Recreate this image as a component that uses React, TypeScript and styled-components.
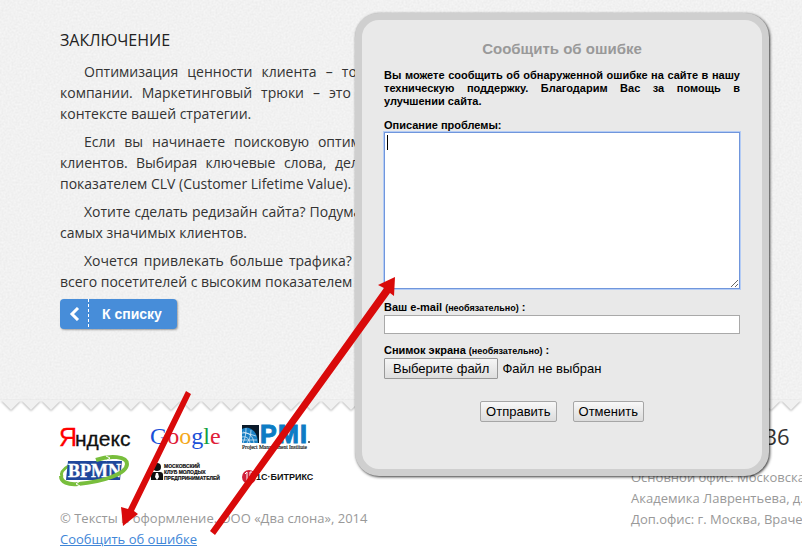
import React from 'react';
import styled, { createGlobalStyle } from 'styled-components';

const GlobalStyle = createGlobalStyle`
  *, *::before, *::after { box-sizing: border-box; }
  body { margin: 0; background: #fff; overflow-x: hidden; }
`;

const sans = '"Open Sans", "Noto Sans", sans-serif';
const arial = '"Liberation Sans", Arial, sans-serif';

const Page = styled.div`
  position: relative;
  overflow: hidden;
  font-family: ${sans};
  font-size: 14px;
  line-height: 21px;
  color: #333;
`;

const Paper = styled.main`
  position: relative;
  padding: 30px 52px 71px 60px;
  background: #f0f0f0;
`;

const Grain = styled.svg`
  position: absolute;
  inset: 0;
  width: 100%;
  height: 100%;
  pointer-events: none;
`;

const Article = styled.article`
  position: relative;
  margin-bottom: 7px;
`;

const Heading = styled.h2`
  margin: 0 0 10px;
  font-size: 16px;
  line-height: 21px;
  font-weight: 400;
  text-transform: uppercase;
  color: #222;
`;

const Paragraph = styled.p`
  margin: 0 0 7px;
  text-align: justify;
  text-indent: 24px;
`;

const BackButton = styled.button`
  position: relative;
  display: flex;
  align-items: center;
  height: 30px;
  padding: 0;
  border: 0;
  border-radius: 4px;
  background: #478dd9;
  color: #fff;
  font: bold 14px/20px ${arial};
  box-shadow: 1px 1px 2px rgba(0, 0, 0, 0.35);
`;

const BackIcon = styled.span`
  display: flex;
  align-items: center;
  justify-content: center;
  width: 29px;
  height: 30px;
  background: repeating-linear-gradient(#fff 0 3px, transparent 3px 5px) right / 1px 100% no-repeat;
`;

const BackText = styled.span`
  padding: 0 15px 0 13px;
`;

const TornEdge = styled.svg`
  display: block;
  width: 100%;
  height: 16px;
  filter: drop-shadow(0 1px 1px rgba(0, 0, 0, 0.3));
`;

const Footer = styled.footer`
  display: flex;
  justify-content: space-between;
  padding: 8px 0 4px 60px;
  font-size: 13px;
  color: #999;
`;

const Logos = styled.div`
  display: grid;
  grid-template-columns: repeat(3, 90px);
  grid-template-rows: 31px 34px;
  margin-bottom: 19px;
`;

const Logo = styled.svg`
  display: block;
  width: 80px;
  height: 34px;
  overflow: visible;
`;

const FooterLink = styled.a`
  color: #4086d8;
  text-decoration: underline;
`;

const Contacts = styled.address`
  width: 171px;
  font-style: normal;
  white-space: nowrap;
`;

const Phone = styled.div`
  margin-bottom: 18px;
  font-size: 22px;
  line-height: 25px;
  color: #333;
`;

const Dialog = styled.form`
  position: absolute;
  top: 13px;
  left: 355px;
  width: 414px;
  padding: 18px 22px 47px;
  border: 7px solid #cfcfcf;
  border-radius: 24px;
  background: #e9e9e9;
  box-shadow: 1px 1px 3px rgba(0, 0, 0, 0.8);
  font: bold 11px/13px ${arial};
  color: #000;
`;

const DialogTitle = styled.h3`
  margin: 0 0 10px;
  font-size: 15px;
  line-height: 21px;
  text-align: center;
  color: #999;
`;

const Intro = styled.p`
  margin: 0 0 11px;
  text-align: justify;
`;

const Field = styled.div<{ $gap: number }>`
  display: flex;
  flex-direction: column;
  margin-bottom: ${(p) => p.$gap}px;
`;

const Label = styled.label`
  display: block;
`;

const Optional = styled.span`
  font-size: 9px;
`;

const Message = styled.textarea`
  display: block;
  width: 100%;
  height: 157px;
  padding: 2px;
  border: 1px solid #7096dc;
  outline: 1px solid #b4ccf5;
  outline-offset: 0;
  background: #fff;
  font: 13px/16px ${arial};
  resize: vertical;
`;

const MessageBox = styled.div`
  position: relative;
`;

const Caret = styled.span`
  position: absolute;
  top: 3px;
  left: 3px;
  width: 1px;
  height: 15px;
  background: #000;
`;

const Email = styled.input`
  width: 100%;
  height: 19px;
  padding: 1px 2px;
  border: 1px solid #a9a9a9;
  background: #fff;
  font: 13px/15px ${arial};
`;

const FileRow = styled.div`
  display: flex;
  align-items: center;
  gap: 4px;
  font: 13px/19px ${arial};
`;

const FileInput = styled.input`
  position: absolute;
  width: 1px;
  height: 1px;
  opacity: 0;
`;

const FileButton = styled.label`
  padding: 0 8px;
  border: 1px solid #999;
  border-radius: 1px;
  background: linear-gradient(#f6f6f6, #dedede);
`;

const Actions = styled.div`
  display: flex;
  justify-content: center;
  gap: 16px;
`;

const ActionButton = styled.button`
  height: 21px;
  padding: 0 5px;
  border: 1px solid #a6a6a6;
  border-radius: 2px;
  background: linear-gradient(#f8f8f8, #dcdcdc);
  color: #000;
  font: 13px/19px ${arial};
`;

const Arrows = styled.svg`
  position: absolute;
  top: 0;
  left: 0;
  pointer-events: none;
`;

const paragraphs = [
  'Оптимизация ценности клиента – то, на чем именно должно строиться развитие любой компании. Маркетинговый трюки – это и лишь тот инструмент, который работает только в контексте вашей стратегии.',
  'Если вы начинаете поисковую оптимизацию, подумайте о привлечении и самых ценных клиентов. Выбирая ключевые слова, делайте акцент на тех запросах посетителей с высоким показателем CLV (Customer Lifetime Value).',
  'Хотите сделать редизайн сайта? Подумайте, как он поможет удержать и привлечь современной самых значимых клиентов.',
  'Хочется привлекать больше трафика? Определите, какие именно и каналы приводят больше всего посетителей с высоким показателем CLV.',
];

const YandexLogo = () => (
  <Logo viewBox="0 0 80 34" role="img" aria-label="Яндекс">
    <text y="22" fontFamily='"Liberation Sans", sans-serif' fontSize="21" fill="#111" stroke="#111" strokeWidth=".3">
      <tspan x="-1" fill="#f00" stroke="#f00" fontSize="25">Я</tspan>
      <tspan x="15">ндекс</tspan>
    </text>
  </Logo>
);

const GoogleLogo = () => (
  <Logo viewBox="0 0 80 34" role="img" aria-label="Google">
    <text y="20" fontFamily='"Liberation Serif", serif' fontSize="24">
      <tspan fill="#1a50d8">G</tspan>
      <tspan fill="#e02038">o</tspan>
      <tspan fill="#f5a81c">o</tspan>
      <tspan fill="#1a50d8">g</tspan>
      <tspan fill="#12a040">l</tspan>
      <tspan fill="#e02038">e</tspan>
    </text>
  </Logo>
);

const PmiLogo = () => (
  <Logo viewBox="0 0 80 34" role="img" aria-label="PMI">
    <rect x="2" y="1" width="17" height="18" fill="#0a1a2a" />
    <path d="M2 19V5C10 1 18 8 18 19Z" fill="#1a80c4" />
    <path d="M2 9C9 8 13 12 14 19M2 13C6 12 9 14 10 19M6 4C6 10 5 15 3 19M11 6C11 12 9 16 7 19M2 16H17M3 8L16 12" fill="none" stroke="#e8f4fc" strokeWidth=".7" />
    <g fontFamily='"Liberation Sans", sans-serif' fontWeight="bold" fontSize="25" fill="#0c7cc4" stroke="#0c7cc4">
      <text x="20" y="19">P</text>
      <text x="38" y="19">M</text>
      <text x="60" y="19">I</text>
    </g>
    <circle cx="69" cy="18" r="1" fill="#333" />
    <text x="2" y="25" fontFamily='"Liberation Serif", serif' fontSize="5.5" fill="#222" stroke="#222" strokeWidth=".2">
      Project Management Institute
    </text>
  </Logo>
);

const BpmnLogo = () => (
  <Logo viewBox="0 0 80 34" role="img" aria-label="BPMN">
    <path d="M10 10C3 14 0 18 2 22" fill="none" stroke="#78be3c" strokeWidth="3" />
    <path d="M8 6H62L60 25H6Z" fill="#1f479b" />
    <text x="8" y="22" fontFamily='"Liberation Serif", serif' fontWeight="bold" fontSize="18" fill="#fff" stroke="#fff" strokeWidth=".4">
      BPMN
    </text>
    <path d="M36 5C50 0 67 1 67 9C67 19 42 27 18 29C8 30 1 27 1 21" fill="none" stroke="#78be3c" strokeWidth="4" />
    <path d="M46 1L50 3L46 6M20 26L16 29L20 31" fill="none" stroke="#fff" />
  </Logo>
);

const ClubLogo = () => (
  <Logo viewBox="0 0 80 34" role="img" aria-label="Московский клуб молодых предпринимателей">
    <circle cx="7" cy="12" r="4" fill="#111" />
    <path d="M1 25V20Q1 17 4 17H10Q13 17 13 20V25Z" fill="#111" />
    <path d="M6 18H8L9 22L7 25L5 22Z" fill="#fff" />
    <g fontFamily='"Liberation Sans", sans-serif' fontWeight="bold" fontSize="5" fill="#111" stroke="#111" strokeWidth=".2">
      <text x="14" y="13">МОСКОВСКИЙ</text>
      <text x="14" y="19">КЛУБ МОЛОДЫХ</text>
      <text x="14" y="25">ПРЕДПРИНИМАТЕЛЕЙ</text>
    </g>
  </Logo>
);

const BitrixLogo = () => (
  <Logo viewBox="0 0 80 34" role="img" aria-label="1С-Битрикс">
    <circle cx="9" cy="22" r="7" fill="#d0203a" />
    <path d="M5 19L7 17V26M10 26V17H12Q14 20 12 23" fill="none" stroke="#fff" />
    <text x="16" y="25" fontFamily='"Liberation Sans", sans-serif' fontWeight="bold" fontSize="9" fill="#111">
      1С·БИТРИКС
    </text>
  </Logo>
);

export default function App() {
  return (
    <Page>
      <GlobalStyle />
      <Paper>
        <Grain aria-hidden="true">
          <filter id="grain" x="0" y="0" width="100%" height="100%" colorInterpolationFilters="sRGB">
            <feTurbulence type="fractalNoise" baseFrequency="0.5" numOctaves="3" />
            <feColorMatrix values="0.06 0 0 0 0.915  0.06 0 0 0 0.915  0.06 0 0 0 0.915  0 0 0 0 1" />
          </filter>
          <rect width="100%" height="100%" filter="url(#grain)" />
        </Grain>
        <Article>
          <Heading>Заключение</Heading>
          {paragraphs.map((text) => (
            <Paragraph key={text}>{text}</Paragraph>
          ))}
        </Article>
        <BackButton type="button">
          <BackIcon>
            <svg width="12" height="14" viewBox="0 0 12 14" aria-hidden="true">
              <path d="M9 1L3 7L9 13" fill="none" stroke="#fff" strokeWidth="3" />
            </svg>
          </BackIcon>
          <BackText>К списку</BackText>
        </BackButton>
      </Paper>
      <TornEdge aria-hidden="true">
        <pattern id="teeth" width="20" height="16" patternUnits="userSpaceOnUse" patternTransform="translate(1 0)">
          <path d="M0 0L10 10L20 0Z" fill="#f0f0f0" />
        </pattern>
        <rect width="100%" height="16" fill="url(#teeth)" />
      </TornEdge>
      <Footer>
        <div>
          <Logos>
            <YandexLogo />
            <GoogleLogo />
            <PmiLogo />
            <BpmnLogo />
            <ClubLogo />
            <BitrixLogo />
          </Logos>
          <div>© Тексты и оформление. ООО «Два слона», 2014</div>
          <FooterLink href="#report">Сообщить об ошибке</FooterLink>
        </div>
        <Contacts>
          <Phone>(383) 363-36-36</Phone>
          <div>Основной офис: Московска</div>
          <div>Академика Лаврентьева, д.</div>
          <div>Доп.офис: г. Москва, Враче</div>
        </Contacts>
      </Footer>

      <Dialog id="report" aria-labelledby="report-title">
        <DialogTitle id="report-title">Сообщить об ошибке</DialogTitle>
        <Intro>
          Вы можете сообщить об обнаруженной ошибке на сайте в нашу техническую поддержку. Благодарим Вас за
          помощь в улучшении сайта.
        </Intro>
        <Field $gap={12}>
          <Label htmlFor="message">Описание проблемы:</Label>
          <MessageBox>
            <Message id="message" />
            <Caret />
          </MessageBox>
        </Field>
        <Field $gap={10}>
          <Label htmlFor="email">
            Ваш e-mail <Optional>(необязательно)</Optional> :
          </Label>
          <Email id="email" type="email" />
        </Field>
        <Field $gap={22}>
          <Label htmlFor="shot">
            Снимок экрана <Optional>(необязательно)</Optional> :
          </Label>
          <FileRow>
            <FileInput id="shot" type="file" />
            <FileButton htmlFor="shot">Выберите файл</FileButton>
            <span>Файл не выбран</span>
          </FileRow>
        </Field>
        <Actions>
          <ActionButton type="submit">Отправить</ActionButton>
          <ActionButton type="button">Отменить</ActionButton>
        </Actions>
      </Dialog>

      <Arrows width="802" height="554" viewBox="0 0 802 554" aria-hidden="true">
        <g fill="#d90a0a" stroke="none">
          <path d="M186 391L191 394L134 511L138 514L123 526L121 507L128 509Z" />
          <path d="M210 531L215 535L390 293L394 296L395 277L378 285L384 288Z" />
        </g>
      </Arrows>
    </Page>
  );
}
